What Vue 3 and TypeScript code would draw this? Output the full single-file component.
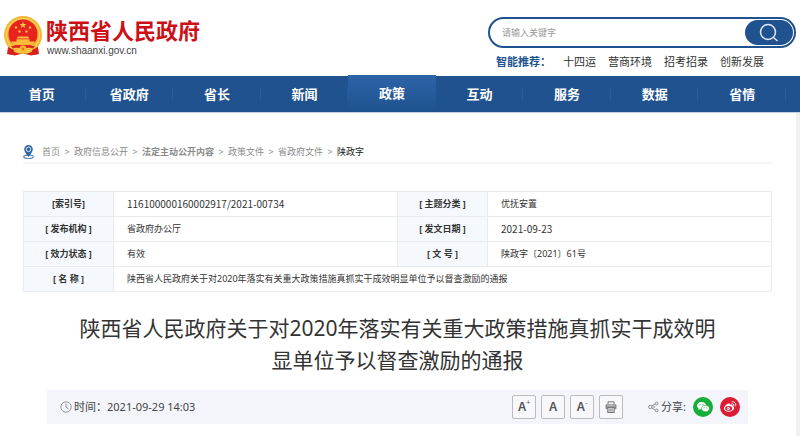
<script setup lang="ts">
import { ref } from 'vue'

interface Crumb { label: string; bold?: boolean }
interface Cell { label: string; value: string; numeric?: boolean }

const keyword = ref('')
const hotWords: string[] = ['十四运', '营商环境', '招考招录', '创新发展']
const navItems: string[] = ['首页', '省政府', '省长', '新闻', '政策', '互动', '服务', '数据', '省情']
const activeNav = ref('政策')
const crumbs: Crumb[] = [
  { label: '首页' },
  { label: '政府信息公开' },
  { label: '法定主动公开内容', bold: true },
  { label: '政策文件' },
  { label: '省政府文件' },
]
const rows: Cell[][] = [
  [
    { label: '[索引号]', value: '116100000160002917/2021-00734', numeric: true },
    { label: '[ 主题分类 ]', value: '优抚安置' },
  ],
  [
    { label: '[ 发布机构 ]', value: '省政府办公厅' },
    { label: '[ 发文日期 ]', value: '2021-09-23', numeric: true },
  ],
  [
    { label: '[ 效力状态 ]', value: '有效' },
    { label: '[ 文 号 ]', value: '陕政字〔2021〕61号' },
  ],
]
const title = '陕西省人民政府关于对2020年落实有关重大政策措施真抓实干成效明显单位予以督查激励的通报'
const sizes = [
  { sign: '+', label: '放大字号' },
  { sign: '', label: '默认字号' },
  { sign: '-', label: '缩小字号' },
]
</script>

<template>
  <div class="page" lang="zh-CN">
    <header class="top">
      <a class="brand" href="#">
        <svg class="emblem" viewBox="0 0 38 40" aria-hidden="true">
          <path d="M5 28 L33 28 L34 38 L27 39.500 L19 37.500 L11 39.500 L4 38 Z" fill="#d8251d" />
          <circle cx="19" cy="19" r="19" fill="#f2b632" />
          <circle cx="19" cy="19" r="16.500" fill="none" stroke="#f8cf55" stroke-width="1.500" />
          <circle cx="19" cy="18" r="14.500" fill="#e8231f" />
          <path d="M19 5.500l.9 2.400h2.600l-2.100 1.600.8 2.500-2.200-1.500-2.200 1.500.8-2.500-2.100-1.600h2.600z" fill="#f9c73c" />
          <g fill="#f9b93a">
            <circle cx="12" cy="11.500" r="1.200" /><circle cx="26" cy="11.500" r="1.200" />
            <circle cx="15.500" cy="15.500" r="1.200" /><circle cx="22.500" cy="15.500" r="1.200" />
            <path d="M14 20.500h10l1.500 2h-13z" />
            <path d="M12.500 23.200h13v2.300h5.500l-2 3.500H9l-2-3.500h5.500z" />
          </g>
          <path d="M7 30h24l-3 4H10z" fill="#e0281f" />
          <path d="M9 33.500q5-2 10 1 5-3 10-1" fill="none" stroke="#f7c442" stroke-width="2" />
          <circle cx="19" cy="33" r="3.400" fill="#f5bd38" />
          <circle cx="19" cy="33" r="1.400" fill="#e8781f" />
          <path d="M4 31l6 3-1 5-6-1zM34 31l-6 3 1 5 6-1z" fill="#d4231c" />
          <path d="M12 36.500l4-1v2zM26 36.500l-4-1v2z" fill="#f7c442" />
        </svg>
        <span class="brand-text">
          <strong class="brand-name">陕西省人民政府</strong>
          <span class="brand-url">www.shaanxi.gov.cn</span>
        </span>
      </a>
      <div class="search">
        <form class="search-box" @submit.prevent>
          <input v-model="keyword" class="search-input" type="text" placeholder="请输入关键字" aria-label="请输入关键字" />
          <button class="search-btn" type="submit" aria-label="搜索">
            <svg class="search-icon" viewBox="0 0 20 20" aria-hidden="true">
              <circle cx="9" cy="9" r="7.500" /><path d="M14.500 14.500l4 3.500" />
            </svg>
          </button>
        </form>
        <div class="hot">
          <strong class="hot-label">智能推荐：</strong>
          <a v-for="w in hotWords" :key="w" href="#">{{ w }}</a>
        </div>
      </div>
    </header>

    <nav class="nav">
      <div class="nav-grid">
        <a v-for="n in navItems" :key="n" href="#" class="nav-item" :class="{ active: n === activeNav }" @click.prevent="activeNav = n">{{ n }}</a>
      </div>
    </nav>

    <main class="main">
      <div class="crumbs">
        <svg class="pin" viewBox="0 0 11 14" aria-hidden="true">
          <ellipse cx="5.500" cy="11.800" rx="4.800" ry="1.700" fill="none" stroke="#5f8abb" stroke-width="1.200" />
          <path d="M5.500 0a4.300 4.300 0 0 0-4.300 4.300C1.200 7.300 5.500 12 5.500 12s4.300-4.700 4.300-7.700A4.300 4.300 0 0 0 5.500 0z" fill="#2f64a3" />
          <circle cx="5.500" cy="4.300" r="2.300" fill="none" stroke="#dce8f5" stroke-width="1" />
        </svg>
        <template v-for="c in crumbs" :key="c.label">
          <a href="#" :class="{ bold: c.bold }">{{ c.label }}</a><span class="sep">&gt;</span>
        </template>
        <span class="current">陕政字</span>
      </div>

      <table class="info">
        <colgroup><col class="c-label" /><col /><col class="c-label" /><col /></colgroup>
        <tbody>
          <tr v-for="(r, i) in rows" :key="i">
            <template v-for="c in r" :key="c.label">
              <th scope="row">{{ c.label }}</th>
              <td :class="{ numeric: c.numeric }">{{ c.value }}</td>
            </template>
          </tr>
          <tr>
            <th scope="row">[ 名 称 ]</th>
            <td colspan="3">{{ title }}</td>
          </tr>
        </tbody>
      </table>

      <article class="article">
        <h1>{{ title }}</h1>
        <div class="meta">
          <svg class="clock" viewBox="0 0 12 12" aria-hidden="true">
            <circle cx="6" cy="6" r="5.200" /><path d="M6 2.500V6.300l2.600 1.500" />
          </svg>
          <span class="time">时间：2021-09-29 14:03</span>
          <div class="tools">
            <button v-for="s in sizes" :key="s.label" type="button" class="tool" :aria-label="s.label">A<sup v-if="s.sign">{{ s.sign }}</sup></button>
            <button type="button" class="tool" aria-label="打印">
              <svg class="printer" viewBox="0 0 12 12" aria-hidden="true">
                <path d="M3 3.500V.8h6v2.700" fill="#f8f8fb" stroke="#777" />
                <rect x=".5" y="3.300" width="11" height="5" rx="1.200" fill="#8b8b8e" />
                <path d="M2 4.800h8" stroke="#d7d7da" stroke-width=".8" />
                <rect x="2.800" y="6.500" width="6.400" height="5" fill="#d9d9dc" stroke="#777" />
                <path d="M4 8.300h4M4 9.900h4" stroke="#888" stroke-width=".7" />
              </svg>
            </button>
          </div>
          <div class="share">
            <svg class="share-icon" viewBox="0 0 12 12" aria-hidden="true">
              <path d="M4 5l4-2.500M5 6h3M4 7l4 2.500" />
              <circle cx="2.500" cy="6" r="1.900" /><circle cx="9.500" cy="2.200" r="1.500" /><circle cx="9.500" cy="9.800" r="1.500" />
            </svg>
            <span class="share-label">分享:</span>
            <button type="button" class="round" aria-label="分享到微信">
              <svg viewBox="0 0 20 20" aria-hidden="true">
                <circle cx="10" cy="10" r="10" fill="#16ad39" />
                <path d="M8.500 5C5.900 5 4 6.600 4 8.600c0 1.200.6 2.100 1.600 2.800l-.4 1.500 1.700-.9c.5.200 1 .2 1.600.2 2.600 0 4.600-1.500 4.600-3.600S11.100 5 8.500 5z" fill="#fff" />
                <path d="M12.500 8.300c-2.300 0-4 1.400-4 3.200s1.700 3.200 4 3.200c.5 0 .9 0 1.300-.2l1.500.8-.4-1.300c.9-.6 1.500-1.500 1.500-2.500 0-1.800-1.700-3.200-3.900-3.200z" fill="#fff" stroke="#16ad39" stroke-width=".6" />
                <g fill="#16ad39"><circle cx="7" cy="7.700" r=".6" /><circle cx="10" cy="7.700" r=".6" /><circle cx="11.200" cy="10.700" r=".5" /><circle cx="13.800" cy="10.700" r=".5" /></g>
              </svg>
            </button>
            <button type="button" class="round" aria-label="分享到微博">
              <svg viewBox="0 0 20 20" aria-hidden="true">
                <circle cx="10" cy="10" r="10" fill="#dc1b35" />
                <path d="M8.500 6.500c1-.3 1.700.1 1.500 1.300 1.500-.6 3.100-.4 2.600 1.300 1.200.4 1.700 1.200 1.500 2.200-.4 2-2.800 3.400-5.500 3.400-2.600 0-4.700-1.200-4.700-3.100 0-1.800 2.500-4.500 4.600-5.100z" fill="#fff" />
                <ellipse cx="8.700" cy="11.400" rx="3.500" ry="2.300" fill="#dc1b35" />
                <circle cx="8.300" cy="11.500" r="1.500" fill="#fff" />
                <circle cx="8" cy="11.700" r=".6" fill="#dc1b35" />
                <path d="M12 6.700c1.400-.2 2.200.7 1.900 2M12 4.800c2.600-.4 4.400 1.500 3.700 4" fill="none" stroke="#fff" stroke-width=".9" stroke-linecap="round" />
              </svg>
            </button>
          </div>
        </div>
      </article>
    </main>
  </div>
</template>

<style>
body {
  background: #fff;
}
</style>

<style scoped>
.page {
  display: flex;
  flex-direction: column;
  min-height: 100vh;
  background: #f0f0f0;
  color: #333;
  font-family: "Noto Sans", "Noto Sans CJK SC", sans-serif;
  font-size: 9px;
}
.page * {
  box-sizing: border-box;
}
a {
  color: inherit;
  text-decoration: none;
}
button {
  padding: 0;
  border: 0;
  background: none;
  font-family: inherit;
  cursor: pointer;
}
svg {
  display: block;
  flex: none;
}

.top {
  display: flex;
  justify-content: space-between;
  align-items: flex-start;
  height: 76px;
  padding: 16px 4px 0;
  background: #fff;
}
.brand {
  display: flex;
  gap: 4px;
}
.emblem {
  width: 38px;
  height: 40px;
}
.brand-text {
  display: flex;
  flex-direction: column;
}
.brand-name {
  color: #cc1016;
  font-size: 22px;
  line-height: 29px;
}
.brand-url {
  padding-left: 1px;
  color: #444;
  font-family: "Liberation Sans", Arial, sans-serif;
  font-size: 10px;
  line-height: 11px;
}
.search {
  width: 308px;
  padding-top: 1px;
}
.search-box {
  display: flex;
  align-items: center;
  height: 31px;
  padding: 1px;
  border: 2px solid #20528f;
  border-radius: 16px;
}
.search-input {
  flex: 1;
  min-width: 0;
  padding: 0 11px;
  border: 0;
  outline: 0;
  background: none;
  font-family: inherit;
  font-size: 9px;
}
.search-input::placeholder {
  color: #999;
}
.search-btn {
  display: flex;
  align-items: center;
  justify-content: center;
  width: 48px;
  height: 25px;
  border-radius: 13px;
  background: #20528f;
}
.search-icon {
  width: 20px;
  height: 20px;
  fill: none;
  stroke: #dfe9f4;
  stroke-width: 1.5;
}
.hot {
  display: flex;
  gap: 12px;
  padding: 6px 0 0 8px;
  font-size: 11px;
  line-height: 16px;
  white-space: nowrap;
}
.hot-label {
  color: #20528f;
}

.nav {
  background: #20528f;
  border-bottom: 1px solid #c3d0e0;
}
.nav-grid {
  display: grid;
  grid-template-columns: repeat(9, 1fr);
  margin: 0 14px 0 -2px;
}
.nav-item {
  height: 36px;
  color: #fff;
  font-size: 13px;
  font-weight: bold;
  line-height: 36px;
  text-align: center;
  background: linear-gradient(#2c5c98, #2c5c98) right center / 1px 14px no-repeat;
}
.nav-item.active {
  margin-top: -1px;
  height: 37px;
  background: linear-gradient(#2d64a8, #20528f);
}

.main {
  flex: 1;
  margin-right: 4px;
  padding: 28px 24px 12px 23px;
  background: #fff;
}
.crumbs {
  display: flex;
  align-items: center;
  height: 23px;
  border-bottom: 2px solid #f5f5f5;
  color: #8a8a8a;
  white-space: nowrap;
}
.pin {
  width: 11px;
  height: 14px;
  margin-right: 8px;
}
.sep {
  width: 14px;
  text-align: center;
}
.bold {
  font-weight: bold;
}
.current {
  color: #222;
}

.info {
  width: 100%;
  margin-top: 27px;
  border-collapse: collapse;
  table-layout: fixed;
}
.c-label {
  width: 90px;
}
.info th,
.info td {
  height: 25px;
  padding: 0;
  border: 1px solid #e9ebed;
  line-height: 14px;
}
.info th {
  background: #f5f9fd;
  font-weight: bold;
  text-align: center;
}
.info td {
  padding-left: 13px;
  text-align: left;
}
.info .numeric {
  font-family: "Noto Sans CJK SC", sans-serif;
  font-size: 10px;
}

.article {
  padding: 0 24px;
}
h1 {
  margin: 20px 0 14px;
  padding: 0 25px;
  font-size: 21px;
  font-weight: normal;
  line-height: 32px;
  text-align: center;
}
.meta {
  display: flex;
  align-items: center;
  height: 34px;
  padding: 0 8px 0 13px;
  background: #f4f5fb;
  color: #444;
  font-size: 11px;
  line-height: 16px;
  white-space: nowrap;
}
.clock {
  width: 12px;
  height: 12px;
  margin-right: 2px;
  fill: none;
  stroke: #999;
}
.tools {
  display: flex;
  gap: 5px;
  margin-left: auto;
}
.tool {
  display: flex;
  align-items: center;
  justify-content: center;
  width: 24px;
  height: 24px;
  border: 1px solid #bbb;
  border-radius: 2px;
  background: #f8f8fc;
  color: #555;
  font-family: "Liberation Sans", Arial, sans-serif;
  font-size: 12px;
  font-weight: bold;
}
.tool sup {
  align-self: flex-start;
  padding-top: 3px;
  font-size: 7px;
  font-weight: normal;
  line-height: 7px;
}
.printer {
  width: 12px;
  height: 12px;
}
.share {
  display: flex;
  align-items: center;
  gap: 7px;
  margin-left: 25px;
}
.share-icon {
  width: 11px;
  height: 12px;
  margin-right: -5px;
  fill: none;
  stroke: #888;
}
.round,
.round svg {
  width: 20px;
  height: 20px;
}
</style>
